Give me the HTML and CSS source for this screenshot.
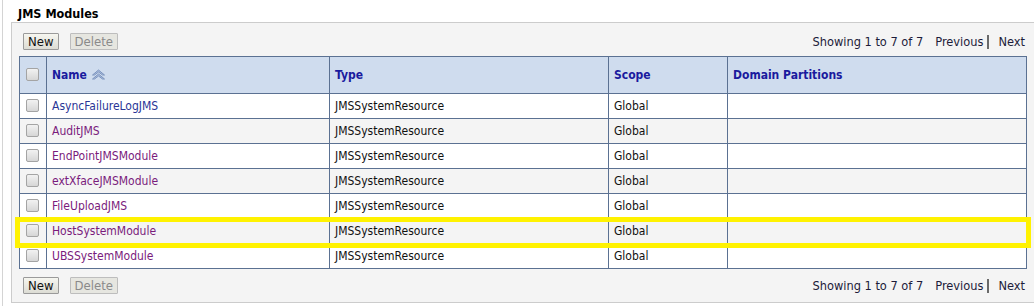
FILE: index.html
```html
<!DOCTYPE html>
<html lang="en">
<head>
  <meta charset="UTF-8">
  <title>JMS Modules</title>
  <link rel="stylesheet" href="styles.css">
</head>
<body>
  <div class="page">
    <h2 class="title">JMS Modules</h2>

    <div class="panel">
      <div class="toolbar">
        <div class="buttons">
          <button class="btn">New</button>
          <button class="btn" disabled>Delete</button>
        </div>
        <div class="pager"><span>Showing 1 to 7 of 7</span><span class="nav prev">Previous</span><span class="sep"></span><span class="nav next">Next</span></div>
      </div>

      <table class="grid">
        <colgroup>
          <col class="c-check">
          <col class="c-name">
          <col class="c-type">
          <col class="c-scope">
          <col>
        </colgroup>
        <thead>
          <tr>
            <th><span class="box"></span></th>
            <th>Name
              <svg class="sort" width="15" height="11" viewBox="0 0 15 11">
                <path d="M1.5 6 L7.5 1 L13.5 6 L11.5 6 L7.5 3 L3.5 6 Z" fill="#a9bcdc" stroke="#7d95bf" stroke-width="1" stroke-linejoin="round"/>
                <path d="M1.5 10 L7.5 5 L13.5 10 L11.5 10 L7.5 7 L3.5 10 Z" fill="#a9bcdc" stroke="#7d95bf" stroke-width="1" stroke-linejoin="round"/>
              </svg>
            </th>
            <th>Type</th>
            <th>Scope</th>
            <th>Domain Partitions</th>
          </tr>
        </thead>
        <tbody>
          <tr><td><span class="box"></span></td><td><a class="link fresh" href="#">AsyncFailureLogJMS</a></td><td>JMSSystemResource</td><td>Global</td><td></td></tr>
          <tr><td><span class="box"></span></td><td><a class="link" href="#">AuditJMS</a></td><td>JMSSystemResource</td><td>Global</td><td></td></tr>
          <tr><td><span class="box"></span></td><td><a class="link" href="#">EndPointJMSModule</a></td><td>JMSSystemResource</td><td>Global</td><td></td></tr>
          <tr><td><span class="box"></span></td><td><a class="link" href="#">extXfaceJMSModule</a></td><td>JMSSystemResource</td><td>Global</td><td></td></tr>
          <tr><td><span class="box"></span></td><td><a class="link" href="#">FileUploadJMS</a></td><td>JMSSystemResource</td><td>Global</td><td></td></tr>
          <tr class="marked"><td><span class="box"></span><span class="mark"></span></td><td><a class="link" href="#">HostSystemModule</a></td><td>JMSSystemResource</td><td>Global</td><td></td></tr>
          <tr><td><span class="box"></span></td><td><a class="link" href="#">UBSSystemModule</a></td><td>JMSSystemResource</td><td>Global</td><td></td></tr>
        </tbody>
      </table>

      <div class="toolbar bottom">
        <div class="buttons">
          <button class="btn">New</button>
          <button class="btn" disabled>Delete</button>
        </div>
        <div class="pager"><span>Showing 1 to 7 of 7</span><span class="nav prev">Previous</span><span class="sep"></span><span class="nav next">Next</span></div>
      </div>
    </div>
  </div>
</body>
</html>
```

FILE: styles.css
```css
body {
  margin: 0;
  background-color: #ffffff;
  font-family: "DejaVu Sans Condensed", "DejaVu Sans", sans-serif;
  font-size: 12px;
  color: #111;
  overflow: hidden;
}

.page {
  margin-left: 2px;
  border-left: 1px solid #d4d4d4;
  height: 306px;
}

.title {
  margin: 0;
  padding: 5px 0 0 15px;
  height: 17px;
  font-size: 12.5px;
  font-weight: bold;
  line-height: 17px;
  color: #000;
}

.panel {
  margin-left: 8px;
  width: 1030px;
  height: 281px;
  padding: 10px 0 0 7px;
  box-sizing: border-box;
  background-color: #f4f4f4;
  border: 1px solid #cccccc;
  border-right: none;
}

.toolbar {
  display: flex;
  justify-content: space-between;
  align-items: center;
  width: 1008px;
  height: 17px;
}

.toolbar.bottom {
  margin-top: 8px;
}

.buttons {
  display: flex;
  gap: 11px;
  padding-left: 4px;
}

.btn {
  height: 17px;
  padding: 0 4px;
  font-family: inherit;
  font-size: 13px;
  line-height: 15px;
  color: #111;
  background: linear-gradient(#f6f6f0, #dcdcd4);
  border: 1px solid #9a9a9a;
  border-radius: 1px;
}

.btn:disabled {
  color: #8a8a8a;
  background: #e6e6e0;
  border-color: #bdbdbd;
}

.pager {
  display: flex;
  align-items: center;
  padding-right: 2px;
  font-size: 12.7px;
  color: #1c1c3a;
}

.nav {
  color: #1c1c3a;
}

.prev {
  margin-left: 12px;
}

.next {
  margin-left: 9px;
}

.sep {
  display: inline-block;
  width: 2px;
  height: 14px;
  margin-left: 4px;
  background-color: #6a6a6a;
}

.grid {
  margin-top: 6px;
  width: 1008px;
  table-layout: fixed;
  border-collapse: collapse;
  background-color: #ffffff;
}

.c-check { width: 27px; }
.c-name { width: 283px; }
.c-type { width: 279px; }
.c-scope { width: 119px; }

.grid th,
.grid td {
  border: 1px solid #5b7192;
  padding: 0 0 0 5px;
  text-align: left;
  white-space: nowrap;
}

.grid th {
  height: 36px;
  background-color: #cfdcee;
  color: #1a1a9e;
  font-weight: bold;
}

.grid td {
  height: 24px;
  color: #111;
}

.grid tbody tr:nth-child(even) td {
  background-color: #f4f4f4;
}

.grid th:first-child,
.grid td:first-child {
  padding-left: 6px;
  position: relative;
}

.box {
  display: block;
  width: 11px;
  height: 11px;
  margin-top: -1px;
  border: 1px solid #a4a4a4;
  border-radius: 2px;
  background: linear-gradient(#f2f2f2, #d6d6d6);
}

.sort {
  vertical-align: -1px;
  margin-left: 0;
}

.link {
  color: #7a1b7c;
  text-decoration: none;
}

.link.fresh {
  color: #2a3596;
}

/* yellow annotation frame around the HostSystemModule row */
.mark {
  position: absolute;
  left: -5px;
  top: -2px;
  width: 1006px;
  height: 21px;
  border: 5px solid #fff200;
  pointer-events: none;
}
```
